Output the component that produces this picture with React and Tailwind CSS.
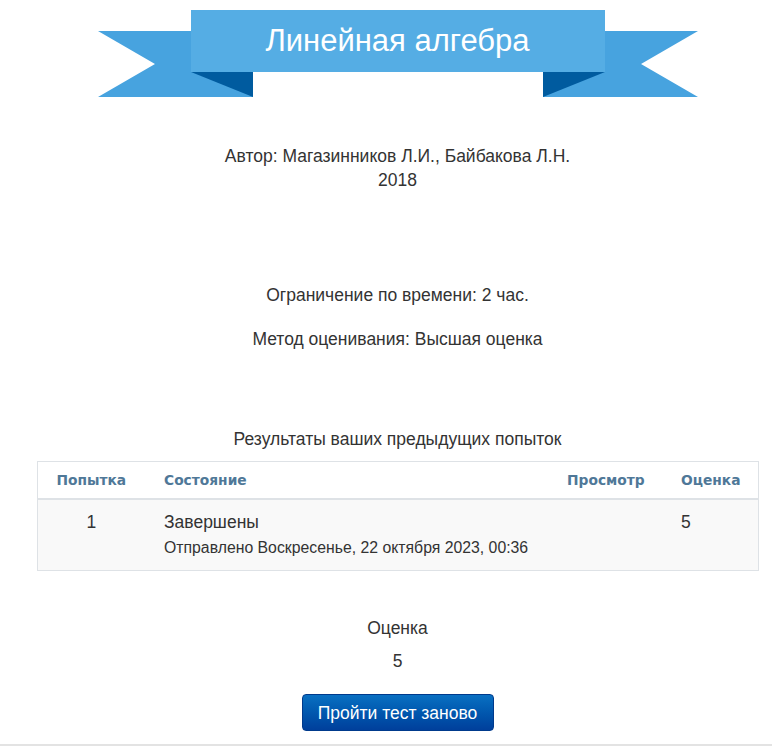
export default function App() {
  const font = { fontFamily: '"Liberation Sans", Arial, sans-serif' };
  const bold = { fontFamily: '"DejaVu Sans", Verdana, sans-serif' };
  return (
    <div className="w-[772px] h-[746px] overflow-hidden bg-white text-[#333] text-[17.5px] leading-[24px]" style={font}>
      <div className="ml-[37px] w-[721px] flex flex-col items-center">
        <div className="relative w-[600px] h-[97px]">
          <svg width="600" height="97" viewBox="0 0 600 97" className="block">
            <polygon points="0,31 155,31 155,97 0,97 57,64" fill="#47a3df" />
            <polygon points="600,31 445,31 445,97 600,97 543,64" fill="#47a3df" />
            <polygon points="93,72 155,72 155,97" fill="#005b9f" />
            <polygon points="507,72 445,72 445,97" fill="#005b9f" />
            <rect x="93" y="10" width="414" height="62" fill="#55ade4" />
          </svg>
          <div className="absolute left-[93px] top-[10px] w-[414px] h-[62px] flex items-center justify-center text-white text-[31px] leading-none pb-[1px]">
            Линейная алгебра
          </div>
        </div>

        <div className="mt-[47px] text-center">
          <div>Автор: Магазинников Л.И., Байбакова Л.Н.</div>
          <div>2018</div>
        </div>

        <div className="mt-[91px] text-center">Ограничение по времени: 2 час.</div>
        <div className="mt-[20px] text-center">Метод оценивания: Высшая оценка</div>

        <div className="mt-[76px] text-center">Результаты ваших предыдущих попыток</div>

        <table className="mt-[10px] w-[721px] border border-[#dee2e6] border-collapse table-fixed">
          <colgroup>
            <col className="w-[108px]" />
            <col className="w-[403px]" />
            <col className="w-[114px]" />
            <col className="w-[96px]" />
          </colgroup>
          <thead>
            <tr className="text-[13.8px] font-bold text-[#4f7898] border-b-2 border-[#dee2e6]" style={bold}>
              <th className="h-[37px] text-center font-bold pt-[1px]">Попытка</th>
              <th className="text-left pl-[19px] font-bold pt-[1px]">Состояние</th>
              <th className="text-left pl-[19px] font-bold pt-[1px]">Просмотр</th>
              <th className="text-left pl-[19px] font-bold pt-[1px]">Оценка</th>
            </tr>
          </thead>
          <tbody>
            <tr className="bg-[#f9f9f9] align-top">
              <td className="text-center pt-[10px] h-[72px]">1</td>
              <td className="pl-[19px] pt-[10px]">
                <div>Завершены</div>
                <div className="text-[15.8px] leading-[20px] mt-[4px]">Отправлено Воскресенье, 22 октября 2023, 00:36</div>
              </td>
              <td className="pl-[19px] pt-[10px]"></td>
              <td className="pl-[19px] pt-[10px]">5</td>
            </tr>
          </tbody>
        </table>

        <div className="mt-[45px] text-center">Оценка</div>
        <div className="mt-[9px] text-center">5</div>

        <button className="mt-[21px] w-[192px] h-[37px] rounded-[4px] text-white text-[17.5px] bg-gradient-to-b from-[#0a70c2] to-[#003f9b] border border-[#003a8c]" style={font}>
          Пройти тест заново
        </button>
      </div>
      <div className="mt-[13px] border-t-2 border-[#e3e3e3] h-[10px] bg-[#fafafa]"></div>
    </div>
  );
}
